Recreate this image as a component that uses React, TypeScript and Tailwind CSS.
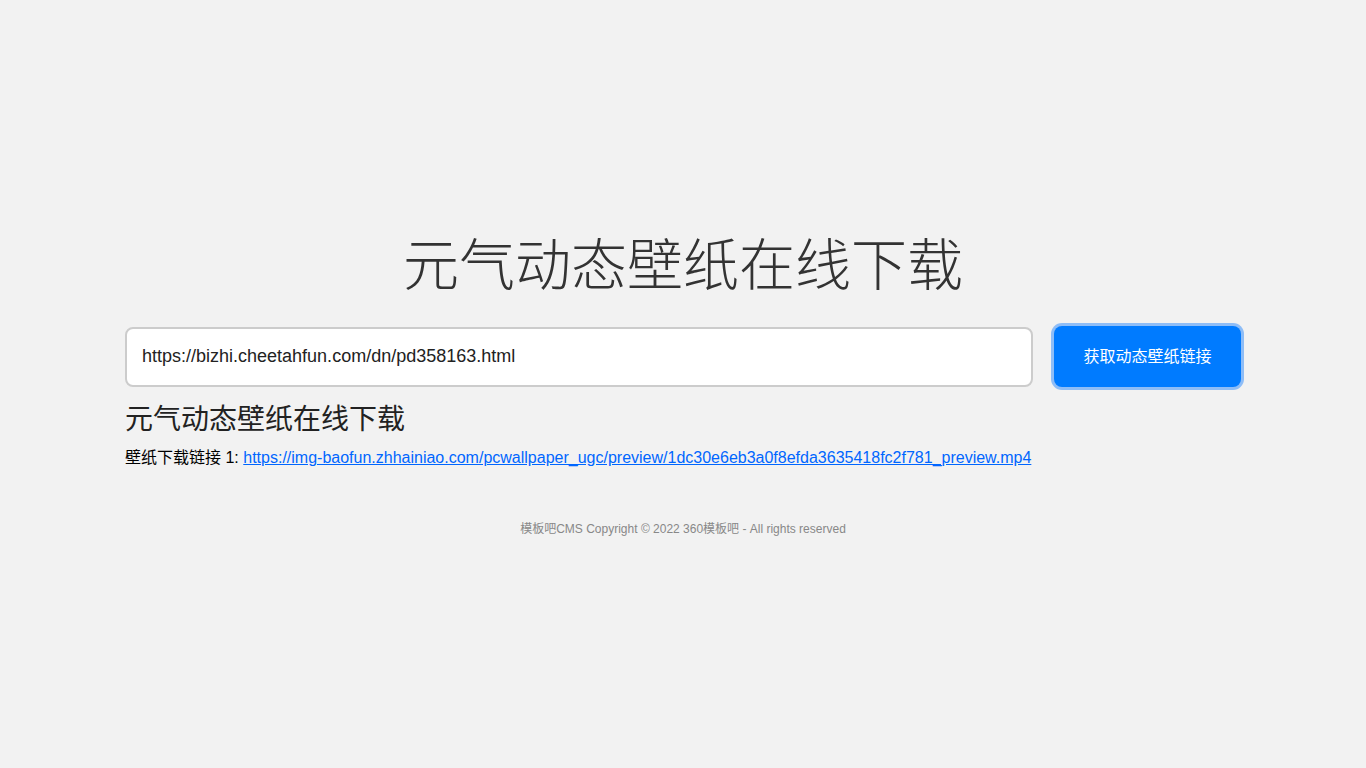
export default function App() {
  return (
    <div className="min-h-screen bg-[#f2f2f2] text-[#212529] font-['Liberation_Sans','Noto_Sans_CJK_SC',sans-serif]">
      <div className="mx-auto w-[1116px] pt-[232px]">
        {/* Title */}
        <h1 className="text-center text-[56px] leading-[1.2] font-light text-[#333]">元气动态壁纸在线下载</h1>

        {/* Search form */}
        <div className="mt-[27px] flex items-center gap-[21px]">
          <input
            type="text"
            defaultValue="https://bizhi.cheetahfun.com/dn/pd358163.html"
            className="h-[60px] flex-1 rounded-[8px] border-2 border-[#ccc] bg-white px-[15px] text-[18px] text-[#222] outline-none"
          />
          <button className="h-[61px] w-[187px] rounded-[8px] bg-[#007bff] text-[16px] text-white ring-[3px] ring-[#8ebdf7]">
            获取动态壁纸链接
          </button>
        </div>

        {/* Result */}
        <div className="mt-[16px]">
          <h2 className="text-[28px] leading-[1.2] text-[#222]">元气动态壁纸在线下载</h2>
          <p className="mt-[9px] text-[16px] leading-[1.5] text-black">
            壁纸下载链接 1:{' '}
            <a href="#" className="text-[#0066ff] underline">
              https://img-baofun.zhhainiao.com/pcwallpaper_ugc/preview/1dc30e6eb3a0f8efda3635418fc2f781_preview.mp4
            </a>
          </p>
        </div>

        {/* Footer */}
        <footer className="mt-[50px] text-center text-[12px] text-[#888]">
          模板吧CMS Copyright © 2022 360模板吧 - All rights reserved
        </footer>
      </div>
    </div>
  );
}
